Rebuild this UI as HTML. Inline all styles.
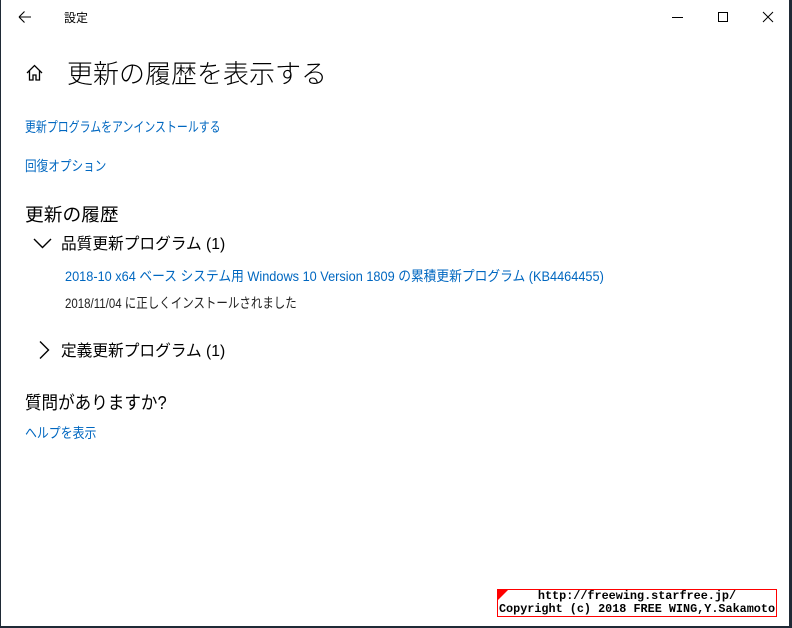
<!DOCTYPE html>
<html><head><meta charset="utf-8"><style>
body{margin:0;width:792px;height:628px;overflow:hidden;background:#1f2a36;font-family:"Liberation Sans","Noto Sans CJK JP",sans-serif;}
#w{position:absolute;left:1px;top:0;width:788px;height:626px;background:#fff;}
.t{position:absolute;white-space:nowrap;color:#000;transform-origin:left top;}
.l{color:#0067c0;font-size:14px;}
</style></head><body><div id="w">
<svg style="position:absolute;left:17px;top:10px" width="14" height="14"><path d="M1 7H13M1 7L6.5 1.5M1 7L6.5 12.5" stroke="#000" stroke-width="1.1" fill="none"/></svg>
<div class="t" style="left:63px;top:9px;font-size:12px">設定</div>
<svg style="position:absolute;left:670px;top:10px;" width="110" height="16"><path d="M1 7.5H12" stroke="#000"/><rect x="47.5" y="2.5" width="9" height="9" stroke="#000" fill="none"/><path d="M92 2L102 12M102 2L92 12" stroke="#000"/></svg>
<svg style="position:absolute;left:24px;top:63px" width="20" height="20"><path d="M2 10L9.5 2.5L17 10M4.5 8V17H8V12H11V17H14.5V8" stroke="#000" stroke-width="1.3" fill="none"/></svg>
<div class="t" style="left:66px;top:54px;font-size:26px;font-weight:300">更新の履歴を表示する</div>
<div class="t l" style="left:24px;top:117px;transform:scaleX(0.78)">更新プログラムをアンインストールする</div>
<div class="t l" style="left:24px;top:156px;transform:scaleX(0.83)">回復オプション</div>
<div class="t" style="left:24px;top:201px;font-size:18px;transform:scaleX(1.04)">更新の履歴</div>
<svg style="position:absolute;left:32px;top:236px" width="20" height="14"><path d="M1 3L9.5 11.5L18 3" stroke="#000" stroke-width="1.4" fill="none"/></svg>
<div class="t" style="left:60px;top:230px;font-size:16px;transform:scaleX(0.98)">品質更新プログラム (1)</div>
<div class="t l" style="left:64px;top:266px;transform:scaleX(0.91)">2018-10 x64 ベース システム用 Windows 10 Version 1809 の累積更新プログラム (KB4464455)</div>
<div class="t" style="left:64px;top:293px;font-size:14px;color:#222;transform:scaleX(0.82)">2018/11/04 に正しくインストールされました</div>
<svg style="position:absolute;left:36px;top:340px" width="14" height="20"><path d="M3 1.5L11.5 10L3 18.5" stroke="#000" stroke-width="1.4" fill="none"/></svg>
<div class="t" style="left:60px;top:337px;font-size:16px;transform:scaleX(0.98)">定義更新プログラム (1)</div>
<div class="t" style="left:24px;top:389px;font-size:18px;transform:scaleX(0.92)">質問がありますか?</div>
<div class="t l" style="left:24px;top:423px;transform:scaleX(0.85)">ヘルプを表示</div>
<div style="position:absolute;left:496px;top:589px;width:278px;height:26px;border:1px solid #f00;background:#fff;font-family:'Liberation Mono',monospace;font-size:11.8px;font-weight:bold;line-height:13px;text-align:center;color:#000">
<div style="position:absolute;left:0;top:0;width:0;height:0;border-top:10px solid #f00;border-right:10px solid transparent"></div>
http://freewing.starfree.jp/<br>Copyright (c) 2018 FREE WING,Y.Sakamoto</div>
</div></body></html>
